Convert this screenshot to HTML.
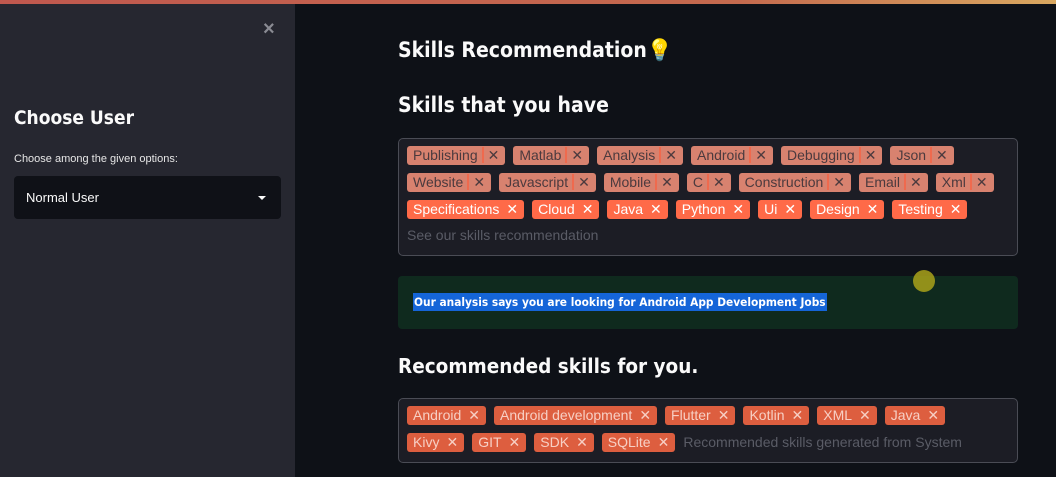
<!DOCTYPE html>
<html><head><meta charset="utf-8"><style>
*{margin:0;padding:0;box-sizing:border-box}
body{width:1056px;height:477px;overflow:hidden;background:#0e1117;font-family:"Liberation Sans",sans-serif;position:relative}
.top{position:absolute;left:0;top:0;width:1056px;height:4px;background:linear-gradient(90deg,#c0584e,#c46a4e 70%,#d9a860)}
.side{position:absolute;left:0;top:4px;width:295px;height:473px;background:#262730}
.x{position:absolute;left:263px;top:14px;color:#8a8b93;font-size:20px;font-weight:bold}
.h{position:absolute;color:#fafafa;font-weight:bold;font-family:"DejaVu Sans Condensed","Liberation Sans",sans-serif}
.sel{position:absolute;left:14px;top:176px;width:267px;height:43px;background:#0f1117;border-radius:4px;color:#fafafa;font-size:13px;padding:14px 12px}
.sel:after{content:"";position:absolute;right:15px;top:20px;border:4px solid transparent;border-top-color:#fafafa}
.box{position:absolute;left:398px;width:620px;border:1px solid #4a4c55;border-radius:5px;background:#1c1d25;padding:7px 8px}
.row{display:flex;gap:8px;height:19px;margin-bottom:8px}
.t{height:19px;border-radius:3px;font-size:14px;line-height:19px;padding:0 6px;white-space:nowrap}
.t i{font-style:normal;margin-left:7px;font-size:14px}
.m{background:#d8826f;color:#4b3a3e}
.m i{border-left:2px solid #ef6a4e;padding-left:4px;margin-left:4px}
.b{background:#ff6a48;color:#fff}
.r{background:#dd5e3f;color:#f7cfc4}
.ph{color:#5a5c66;font-size:14px}
</style></head><body>
<div class="top"></div>
<div class="side">
<div class="x">×</div>
</div>
<div class="h" style="left:14px;top:107px;font-size:19px">Choose User</div>
<div style="position:absolute;left:14px;top:153px;font-size:11px;color:#e6e6e6">Choose among the given options:</div>
<div class="sel">Normal User</div>

<div class="h" style="left:398px;top:38px;font-size:21px">Skills Recommendation<span style="color:#f5b942">💡</span></div>
<div class="h" style="left:398px;top:93px;font-size:21px">Skills that you have</div>
<div class="box" style="top:138px;height:118px">
<div class="row"><span class="t m">Publishing<i>✕</i></span><span class="t m">Matlab<i>✕</i></span><span class="t m">Analysis<i>✕</i></span><span class="t m">Android<i>✕</i></span><span class="t m">Debugging<i>✕</i></span><span class="t m">Json<i>✕</i></span></div>
<div class="row"><span class="t m">Website<i>✕</i></span><span class="t m">Javascript<i>✕</i></span><span class="t m">Mobile<i>✕</i></span><span class="t m">C<i>✕</i></span><span class="t m">Construction<i>✕</i></span><span class="t m">Email<i>✕</i></span><span class="t m">Xml<i>✕</i></span></div>
<div class="row"><span class="t b">Specifications<i>✕</i></span><span class="t b">Cloud<i>✕</i></span><span class="t b">Java<i>✕</i></span><span class="t b">Python<i>✕</i></span><span class="t b">Ui<i>✕</i></span><span class="t b">Design<i>✕</i></span><span class="t b">Testing<i>✕</i></span></div>
<div class="ph" style="margin-top:3px">See our skills recommendation</div>
</div>
<div style="position:absolute;left:398px;top:276px;width:620px;height:53px;background:#0f2a1e;border-radius:4px"></div>
<div style="position:absolute;left:413px;top:293px;background:#1565d8;color:#fff;font-size:11.8px;font-weight:bold;padding:2px 1px;font-family:'DejaVu Sans Condensed','Liberation Sans',sans-serif">Our analysis says you are looking for Android App Development Jobs</div>
<div style="position:absolute;left:913px;top:270px;width:22px;height:22px;border-radius:50%;background:#a9a21a;opacity:.85"></div>
<div class="h" style="left:398px;top:354px;font-size:20.5px">Recommended skills for you.</div>
<div class="box" style="top:398px;height:65px">
<div class="row"><span class="t r">Android<i>✕</i></span><span class="t r">Android development<i>✕</i></span><span class="t r">Flutter<i>✕</i></span><span class="t r">Kotlin<i>✕</i></span><span class="t r">XML<i>✕</i></span><span class="t r">Java<i>✕</i></span></div>
<div class="row"><span class="t r">Kivy<i>✕</i></span><span class="t r">GIT<i>✕</i></span><span class="t r">SDK<i>✕</i></span><span class="t r">SQLite<i>✕</i></span><span class="ph" style="line-height:19px">Recommended skills generated from System</span></div>
</div>
</body></html>
